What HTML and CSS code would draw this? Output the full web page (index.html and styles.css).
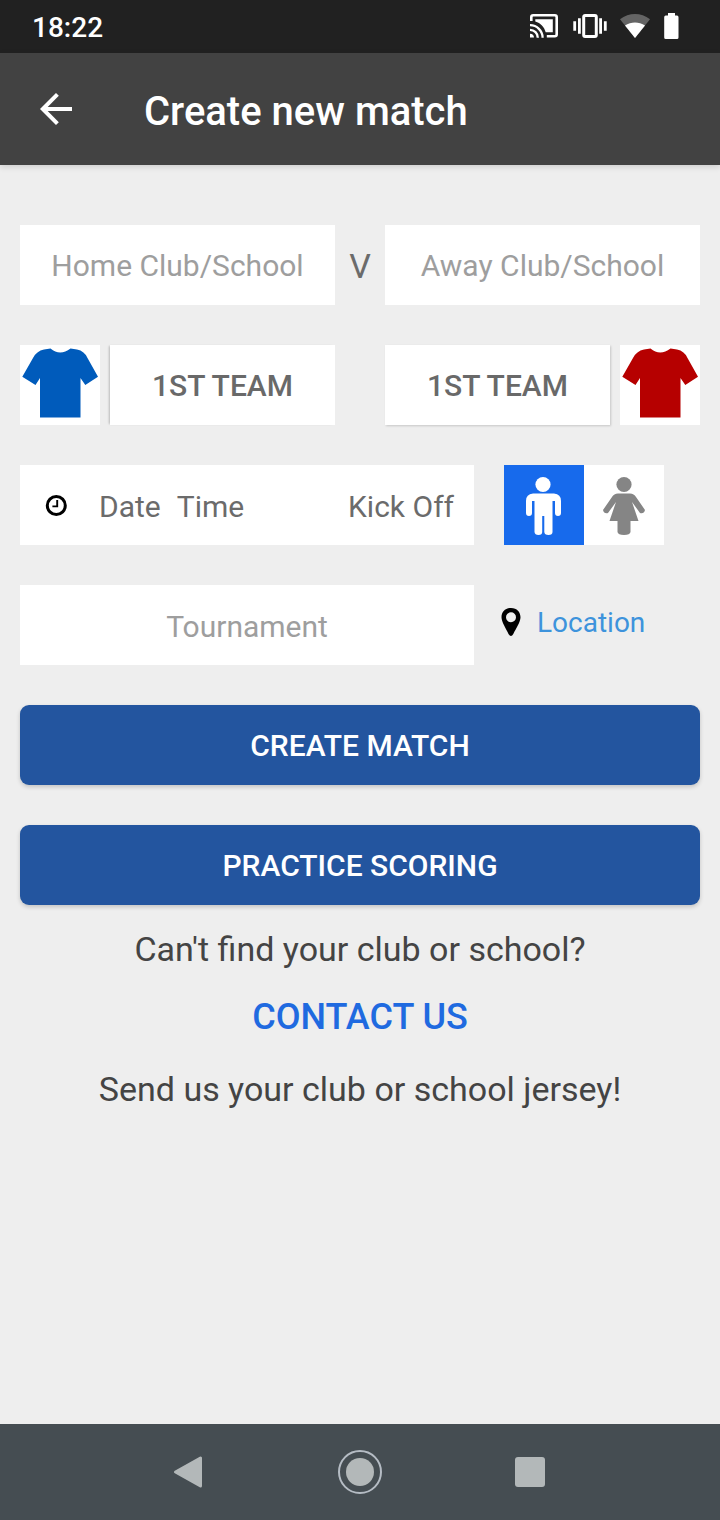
FILE: index.html
```html
<!DOCTYPE html>
<html lang="en">
<head>
  <meta charset="UTF-8">
  <meta name="viewport" content="width=device-width, initial-scale=1">
  <title>Create new match</title>
  <link rel="stylesheet" href="styles.css">
</head>
<body>
  <div class="status-bar">
    <span class="clock">18:22</span>
    <div class="status-icons">
      <svg class="cast" width="28" height="24" viewBox="0 0 28 24">
        <path d="M1.3 7V3.2Q1.3 1.3 3.2 1.3H24.8Q26.7 1.3 26.7 3.2V20.3Q26.7 22.2 24.8 22.2H16.8" fill="none" stroke="#fff" stroke-width="2.6"/>
        <path d="M5.3 5.3H22.8V18.3H15.7C14.3 12.8 10.6 9 5.3 7.4z" fill="#fff"/>
        <path d="M0 19.8A4 4 0 0 1 4 23.6H0z" fill="#fff"/>
        <path d="M0 15.9A7.8 7.8 0 0 1 7.8 23.7M0 11.2A12.5 12.5 0 0 1 12.6 23.7" fill="none" stroke="#fff" stroke-width="2.3"/>
      </svg>
      <svg class="vibrate" width="34" height="24" viewBox="0 0 34 24">
        <rect x="10.7" y="1.5" width="12.6" height="21" rx="1.4" fill="none" stroke="#fff" stroke-width="3"/>
        <path d="M6.4 4.3V19.7M27.6 4.3V19.7M1.7 7.3V16.8M32.3 7.3V16.8" stroke="#fff" stroke-width="2.8"/>
      </svg>
      <svg class="wifi" width="30" height="24" viewBox="0 0 30 24">
        <path d="M15 24L0 5.2C9 -1.7 21 -1.7 30 5.2z" fill="#646464"/>
        <path d="M15 24L5 11.5C11 7.6 19 7.6 25 11.5z" fill="#fff"/>
      </svg>
      <svg class="battery" width="15" height="26" viewBox="0 0 15 26">
        <path d="M4 0H11V2.6H13Q14.5 2.6 14.5 4.2V24.5Q14.5 26 13 26H1.7Q.2 26 .2 24.5V4.2Q.2 2.6 1.7 2.6H4z" fill="#fff"/>
      </svg>
    </div>
  </div>

  <header class="app-bar">
    <svg width="32" height="32" viewBox="0 0 32 32">
      <path d="M32 16H3M17.4 1.4L2.8 16L17.4 30.6" fill="none" stroke="#fff" stroke-width="4"/>
    </svg>
    <h1>Create new match</h1>
  </header>

  <main class="content">
    <div class="row clubs">
      <input class="field club" type="text" placeholder="Home Club/School">
      <span class="versus">V</span>
      <input class="field club" type="text" placeholder="Away Club/School">
    </div>

    <div class="row teams">
      <div class="team">
        <div class="jersey">
          <svg width="80" height="80" viewBox="0 0 80 80">
            <path class="home" d="M30.5 3.5Q40 11.5 50.5 3.5L57 4.5Q64.5 6 67.5 13L78 31.7L65.3 40L60.5 33V72.5H20V33L15.5 40L2.3 31.7L13 13Q16.5 6 24 4.5z"/>
          </svg>
        </div>
        <button class="team-btn shadow-left">1ST TEAM</button>
      </div>
      <div class="team">
        <button class="team-btn shadow-right">1ST TEAM</button>
        <div class="jersey">
          <svg width="80" height="80" viewBox="0 0 80 80">
            <path class="away" d="M30.5 3.5Q40 11.5 50.5 3.5L57 4.5Q64.5 6 67.5 13L78 31.7L65.3 40L60.5 33V72.5H20V33L15.5 40L2.3 31.7L13 13Q16.5 6 24 4.5z"/>
          </svg>
        </div>
      </div>
    </div>

    <div class="row details">
      <div class="kickoff">
        <svg width="22" height="22" viewBox="0 0 22 22">
          <circle cx="11.3" cy="10.5" r="9" fill="none" stroke="#000" stroke-width="3"/>
          <path d="M12.2 5V11.4H7.4" fill="none" stroke="#000" stroke-width="1.9"/>
        </svg>
        <span class="date">Date</span>
        <span class="time">Time</span>
        <span class="label">Kick Off</span>
      </div>
      <div class="gender">
        <svg class="male" width="80" height="80" viewBox="0 0 80 80">
          <circle cx="39" cy="19.5" r="7.6"/>
          <path d="M29 28.5H50Q57 29 57 36V48Q57 51 54 51T51 48V36H48.5V67Q48.5 70 44.5 70T40.3 67V51H38.2V67Q38.2 70 34.5 70T30.5 67V36H28V48Q28 51 25 51T22 48V36Q22 29 29 28.5z"/>
        </svg>
        <svg class="female" width="80" height="80" viewBox="0 0 80 80">
          <circle cx="40" cy="19.5" r="7.6"/>
          <path d="M34 28.5H46Q50 28.5 52 32L61 45Q60 49 56 48L48 37L54.5 56H46.5V67Q46 70 40 70T33.5 67V56H25.5L32 37L24 48Q20 49 19 45L28 32Q30 28.5 34 28.5z"/>
        </svg>
      </div>
    </div>

    <div class="row details">
      <input class="field tournament" type="text" placeholder="Tournament">
      <a class="location">
        <svg width="20" height="28" viewBox="0 0 20 28">
          <path fill-rule="evenodd" d="M10 0C4 0 .5 4.2 .5 9.3C.5 14 5 20.5 7.5 26Q10 30 12.3 26C15 20.5 19.5 14 19.5 9.3C19.5 4.2 16 0 10 0zM10 4.3A5 5 0 1 1 10 14.3A5 5 0 1 1 10 4.3z"/>
        </svg>
        <span>Location</span>
      </a>
    </div>

    <button class="primary">CREATE MATCH</button>
    <button class="primary">PRACTICE SCORING</button>

    <p class="help">Can't find your club or school?</p>
    <a class="contact">CONTACT US</a>
    <p class="help jersey-help">Send us your club or school jersey!</p>
  </main>

  <nav class="nav-bar">
    <svg width="30" height="34" viewBox="0 0 30 34">
      <path d="M2.5 17L27.5 3V31z" fill="#b3b8b9" stroke="#b3b8b9" stroke-width="3" stroke-linejoin="round"/>
    </svg>
    <svg width="44" height="44" viewBox="0 0 44 44">
      <circle cx="22" cy="22" r="21" fill="none" stroke="#b5bcc4" stroke-width="2"/>
      <circle cx="22" cy="22" r="14" fill="#b3b8b9"/>
    </svg>
    <svg width="30" height="30" viewBox="0 0 30 30">
      <rect width="30" height="30" rx="3" fill="#b3b8b9"/>
    </svg>
  </nav>
</body>
</html>
```

FILE: styles.css
```css
* {
  box-sizing: border-box;
}

body {
  margin: 0;
  height: 1520px;
  display: flex;
  flex-direction: column;
  font-family: Roboto, sans-serif;
  background: #eee;
}

svg {
  display: block;
  flex-shrink: 0;
}

button {
  border: none;
  padding: 0;
  font-family: inherit;
  font-size: 30px;
  font-weight: 500;
}

.status-bar {
  height: 53px;
  padding: 0 41px 1px 32px;
  display: flex;
  justify-content: space-between;
  align-items: center;
  background: #212121;
  color: #fff;
}

.clock {
  font-size: 28px;
  font-weight: 500;
  padding-top: 2px;
}

.status-icons {
  display: flex;
  align-items: center;
}

.vibrate {
  margin-left: 15px;
}

.wifi {
  margin-left: 13px;
}

.battery {
  margin-left: 14px;
}

.app-bar {
  height: 112px;
  padding: 0 40px;
  display: flex;
  align-items: center;
  background: #424242;
  color: #fff;
  box-shadow: 0 2px 6px rgba(0, 0, 0, 0.14);
}

.app-bar h1 {
  margin: 4px 0 0 72px;
  font-size: 40px;
  font-weight: 500;
}

.content {
  flex: 1;
  padding: 60px 20px 0;
  display: flex;
  flex-direction: column;
}

.row {
  display: flex;
  height: 80px;
  margin-bottom: 40px;
}

.field {
  height: 80px;
  border: none;
  border-radius: 0;
  padding: 2px 0 0;
  background: #fff;
  text-align: center;
  font-family: inherit;
  font-size: 30px;
  outline: none;
}

.field::placeholder {
  color: #9e9e9e;
}

.club {
  width: 315px;
  padding: 0;
}

.versus {
  width: 50px;
  line-height: 83px;
  text-align: center;
  font-size: 34px;
  color: #6b6b6b;
}

.teams {
  justify-content: space-between;
}

.team {
  display: flex;
  gap: 10px;
}

.jersey {
  width: 80px;
  background: #fff;
}

.home {
  fill: #005bbb;
}

.away {
  fill: #b60000;
}

.team-btn {
  width: 225px;
  background: #fff;
  color: #696969;
}

.shadow-left {
  box-shadow: -2px 0 2px -1px rgba(0, 0, 0, 0.22);
}

.shadow-right {
  box-shadow: 1px 1px 2px rgba(0, 0, 0, 0.16);
}

.details {
  gap: 30px;
}

.kickoff {
  width: 454px;
  padding: 2px 20px 0 25px;
  display: flex;
  align-items: center;
  background: #fff;
  color: #6b6b6b;
  font-size: 30px;
}

.date {
  margin-left: 32px;
}

.time {
  margin-left: 16px;
}

.label {
  margin-left: auto;
}

.gender {
  display: flex;
}

.male {
  background: #176aec;
  fill: #fff;
}

.female {
  background: #fff;
  fill: #858585;
}

.tournament {
  width: 454px;
}

.location {
  height: 74px;
  margin-left: -3px;
  display: flex;
  align-items: center;
  gap: 16px;
  color: #3d93dc;
  font-size: 28px;
}

.location span {
  padding-top: 1px;
}

.primary {
  height: 80px;
  margin-bottom: 40px;
  border-radius: 9px;
  background: #23559f;
  color: #fff;
  box-shadow: 0 2px 4px rgba(0, 0, 0, 0.18);
}

.help {
  margin: -16px 0 0;
  line-height: 40px;
  text-align: center;
  font-size: 34px;
  color: #444;
}

.contact {
  margin-top: 27px;
  line-height: 42px;
  text-align: center;
  font-size: 36px;
  font-weight: 500;
  color: #1f6ae0;
}

.jersey-help {
  margin-top: 31px;
}

.nav-bar {
  height: 96px;
  padding: 0 175px 0 173px;
  display: grid;
  grid-template-columns: 30px 1fr 30px;
  justify-items: center;
  align-items: center;
  background: #454d52;
}

.nav-bar svg:nth-child(2) {
  margin-left: 2px;
}
```
